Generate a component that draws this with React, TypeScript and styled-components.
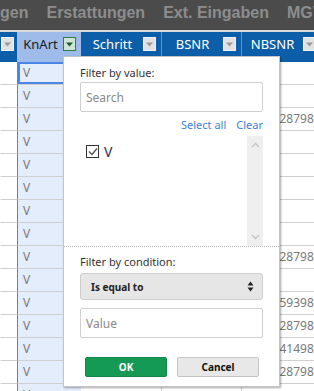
import React from "react";
import styled, { createGlobalStyle } from "styled-components";

const GlobalStyle = createGlobalStyle`
  html, body {
    margin: 0;
    padding: 0;
  }
  body {
    width: 314px;
    height: 391px;
    overflow: hidden;
    background: #fff;
    font-family: "Noto Sans", "DejaVu Sans", sans-serif;
  }
`;

const Page = styled.div`
  position: relative;
  width: 314px;
  height: 391px;
  overflow: hidden;
`;

const TopBar = styled.div`
  height: 32px;
  box-sizing: border-box;
  background: #4b4b4b;
  border-bottom: 2px solid #dcdcdc;
  display: flex;
  align-items: center;
  gap: 18px;
  padding-bottom: 4px;
  white-space: nowrap;
`;

const Tab = styled.span`
  font-family: "Liberation Sans", Arial, sans-serif;
  font-weight: bold;
  font-size: 16px;
  color: #8d8d8d;
`;

const HeaderRow = styled.div`
  display: flex;
  height: 30px;
  background: #0d5ea9;
  white-space: nowrap;
`;

const HeaderCell = styled.div<{ $width: number; $active?: boolean; $sep?: boolean }>`
  flex: none;
  width: ${(p) => p.$width}px;
  box-sizing: border-box;
  display: flex;
  align-items: center;
  padding-bottom: 6px;
  overflow: hidden;
  border-left: 1px solid ${(p) => (p.$sep ? "#5f92d0" : "transparent")};
  background: ${(p) => (p.$active ? "#9fbbe9" : "transparent")};
  color: ${(p) => (p.$active ? "#1b1b1b" : "#ffffff")};
  font-size: 13px;
`;

const HeaderLabel = styled.span`
  flex: 1;
  text-align: center;
`;

const FilterButton = styled.span<{ $active?: boolean }>`
  flex: none;
  width: 13px;
  height: 14px;
  margin-right: 5px;
  box-sizing: border-box;
  display: flex;
  align-items: center;
  justify-content: center;
  background: ${(p) => (p.$active ? "#cfe5d3" : "#e2e2e2")};
  border: 1px solid ${(p) => (p.$active ? "#2f7f44" : "#f2f2f2")};
`;

const Row = styled.div`
  display: flex;
  height: 23px;
  white-space: nowrap;
`;

const Cell = styled.div<{
  $width: number;
  $kind: "plain" | "knart" | "sep";
  $selected?: boolean;
  $pad?: number;
}>`
  flex: none;
  width: ${(p) => p.$width}px;
  box-sizing: border-box;
  overflow: hidden;
  border-bottom: 1px solid #cfcfcf;
  border-left: 1px solid
    ${(p) => (p.$kind === "knart" ? "#4a86e8" : p.$kind === "sep" ? "#cfcfcf" : "transparent")};
  background: ${(p) => (p.$kind === "knart" ? "#e4edfc" : "#ffffff")};
  box-shadow: ${(p) => (p.$selected ? "inset 0 0 0 2px #4a86e8" : "none")};
  padding-left: ${(p) => p.$pad ?? 5}px;
  font-size: 12px;
  line-height: 22px;
  color: #7a7a7a;
`;

const Popup = styled.div`
  position: absolute;
  left: 63px;
  top: 56px;
  width: 217px;
  height: 331px;
  box-sizing: border-box;
  background: #fff;
  border: 1px solid #c4c4c4;
  box-shadow: 1px 1px 2px rgba(0, 0, 0, 0.35);
  display: flex;
  flex-direction: column;
`;

const Section = styled.div<{ $divided?: boolean }>`
  display: flex;
  flex-direction: column;
  padding: ${(p) => (p.$divided ? "7px 16px 0 16px" : "8px 16px 0 16px")};
  border-top: ${(p) => (p.$divided ? "1px dotted #b8b8b8" : "none")};
`;

const Label = styled.div`
  font-size: 11px;
  line-height: 16px;
  color: #333;
`;

const TextBox = styled.div<{ $gap: number }>`
  margin-top: ${(p) => p.$gap}px;
  height: 30px;
  box-sizing: border-box;
  border: 1px solid #cfcfcf;
  border-radius: 2px;
  display: flex;
  align-items: center;
  padding-left: 5px;
  font-size: 12px;
  color: #8a8a8a;
`;

const Links = styled.div`
  margin-top: 3px;
  height: 20px;
  display: flex;
  justify-content: flex-end;
  gap: 10px;
  font-size: 11px;
  line-height: 20px;
  color: #3d7fd6;
`;

const ValueList = styled.div`
  margin-top: 1px;
  height: 110px;
  display: flex;
`;

const ListItems = styled.div`
  flex: 1;
  padding: 9px 0 0 6px;
`;

const Item = styled.div`
  display: flex;
  align-items: center;
  gap: 5px;
  height: 13px;
`;

const CheckBox = styled.span`
  width: 13px;
  height: 13px;
  box-sizing: border-box;
  border: 1px solid #333;
  display: flex;
  align-items: center;
  justify-content: center;
  background: #fff;
`;

const ItemText = styled.span`
  font-size: 14px;
  line-height: 13px;
  color: #1d2f58;
`;

const ScrollBar = styled.div`
  flex: none;
  width: 16px;
  background: #efefef;
  display: flex;
  flex-direction: column;
  justify-content: space-between;
  align-items: center;
  padding: 6px 0;
  box-sizing: border-box;
`;

const Select = styled.div`
  margin-top: 3px;
  height: 27px;
  box-sizing: border-box;
  background: #e6e6e6;
  border: 1px solid #cdcdcd;
  border-radius: 3px;
  display: flex;
  align-items: center;
  justify-content: space-between;
  padding: 0 8px 0 10px;
  font-size: 10px;
  font-weight: bold;
  color: #222;
`;

const Buttons = styled.div`
  margin-top: 19px;
  display: flex;
  gap: 10px;
  padding-left: 5px;
`;

const Button = styled.div<{ $primary?: boolean }>`
  width: 82px;
  height: 20px;
  box-sizing: border-box;
  border-radius: 2px;
  display: flex;
  align-items: center;
  justify-content: center;
  font-size: 10px;
  font-weight: bold;
  background: ${(p) => (p.$primary ? "#159a55" : "#e8e8e8")};
  border: 1px solid ${(p) => (p.$primary ? "#12864a" : "#c4c4c4")};
  color: ${(p) => (p.$primary ? "#ffffff" : "#111")};
`;

const columns = [
  { key: "prev", label: "", width: 17 },
  { key: "knart", label: "KnArt", width: 64 },
  { key: "schritt", label: "Schritt", width: 80 },
  { key: "bsnr", label: "BSNR", width: 80 },
  { key: "nbsnr", label: "NBSNR", width: 80 },
];

const nbsnr: Record<number, string> = {
  2: "401228798",
  8: "713028798",
  10: "135459398",
  11: "401228798",
  12: "771441498",
  13: "401228798",
};

function Triangle({ color }: { color: string }) {
  return (
    <svg width="7" height="5" viewBox="0 0 7 5">
      <path d="M0 0.5 L7 0.5 L3.5 4.5 Z" fill={color} />
    </svg>
  );
}

export default function App(): JSX.Element {
  const rows = Array.from({ length: 15 }, (_, i) => i);
  return (
    <Page>
      <GlobalStyle />
      <TopBar>
        <Tab>gen</Tab>
        <Tab>Erstattungen</Tab>
        <Tab>Ext. Eingaben</Tab>
        <Tab>MGV</Tab>
      </TopBar>
      <HeaderRow>
        {columns.map((c, i) => (
          <HeaderCell key={c.key} $width={c.width} $active={c.key === "knart"} $sep={i >= 3}>
            <HeaderLabel>{c.label}</HeaderLabel>
            <FilterButton $active={c.key === "knart"}>
              <Triangle color={c.key === "knart" ? "#1d5e2e" : "#9a9a9a"} />
            </FilterButton>
          </HeaderCell>
        ))}
      </HeaderRow>
      {rows.map((r) => (
        <Row key={r}>
          <Cell $width={17} $kind="plain" />
          <Cell $width={64} $kind="knart" $selected={r === 0}>V</Cell>
          <Cell $width={80} $kind="plain" />
          <Cell $width={80} $kind="sep" />
          <Cell $width={80} $kind="sep" $pad={10}>{nbsnr[r] ?? ""}</Cell>
        </Row>
      ))}
      <Popup>
        <Section>
          <Label>Filter by value:</Label>
          <TextBox $gap={1}>Search</TextBox>
          <Links>
            <span>Select all</span>
            <span>Clear</span>
          </Links>
          <ValueList>
            <ListItems>
              <Item>
                <CheckBox>
                  <svg width="10" height="9" viewBox="0 0 10 9">
                    <path d="M1 4.5 L4 7.5 L9 1.5" fill="none" stroke="#555" strokeWidth="1.4" />
                  </svg>
                </CheckBox>
                <ItemText>V</ItemText>
              </Item>
            </ListItems>
            <ScrollBar>
              <svg width="9" height="6" viewBox="0 0 9 6">
                <path d="M1 5 L4.5 1.5 L8 5" fill="none" stroke="#c2c2c2" strokeWidth="1.3" />
              </svg>
              <svg width="9" height="6" viewBox="0 0 9 6">
                <path d="M1 1 L4.5 4.5 L8 1" fill="none" stroke="#c2c2c2" strokeWidth="1.3" />
              </svg>
            </ScrollBar>
          </ValueList>
        </Section>
        <Section $divided>
          <Label>Filter by condition:</Label>
          <Select>
            <span>Is equal to</span>
            <svg width="7" height="11" viewBox="0 0 7 11">
              <path d="M0.5 4.5 L3.5 0.5 L6.5 4.5 Z" fill="#222" />
              <path d="M0.5 6.5 L3.5 10.5 L6.5 6.5 Z" fill="#222" />
            </svg>
          </Select>
          <TextBox $gap={8}>Value</TextBox>
          <Buttons>
            <Button $primary>OK</Button>
            <Button>Cancel</Button>
          </Buttons>
        </Section>
      </Popup>
    </Page>
  );
}
